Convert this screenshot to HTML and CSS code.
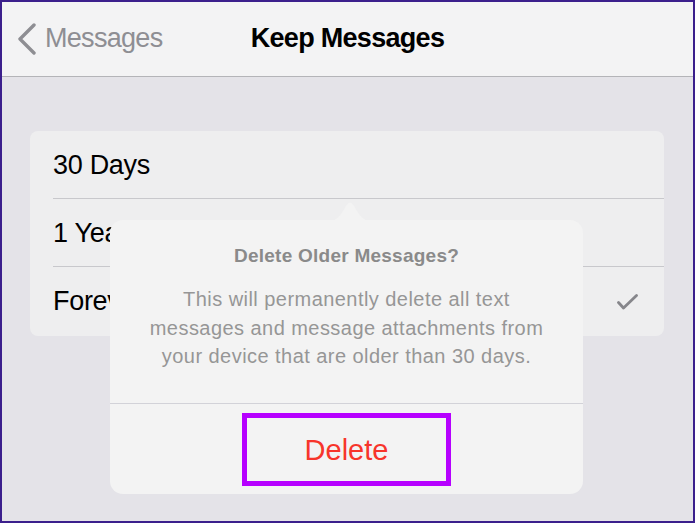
FILE: index.html
```html
<!DOCTYPE html>
<html>
<head>
<meta charset="utf-8">
<link rel="stylesheet" href="styles.css">
</head>
<body>
<div class="frame">
  <header class="nav">
    <div class="back">
      <svg class="chevron" width="20" height="32" viewBox="0 0 20 32"><path d="M17 2 L3 16 L17 30" fill="none" stroke="#8e8e93" stroke-width="3.4" stroke-linecap="round" stroke-linejoin="round"/></svg>
      <span>Messages</span>
    </div>
    <h1 class="title">Keep Messages</h1>
    <div></div>
  </header>
  <main class="content">
    <section class="card">
      <div class="row">30 Days</div>
      <div class="row">1 Year</div>
      <div class="row">
        <span>Forever</span>
        <svg class="check" width="21" height="16" viewBox="0 0 21 16"><path d="M1.5 8.5 L6.5 14 L19.5 1.5" fill="none" stroke="#86868b" stroke-width="2.8" stroke-linecap="round" stroke-linejoin="round"/></svg>
      </div>
    </section>
    <div class="popover">
      <svg class="arrow" width="42" height="21" viewBox="0 0 42 21"><path d="M0 21 C9 21 12 14 17 6 Q21 -1 25 6 C30 14 33 21 42 21 Z" fill="#f3f3f3"/></svg>
      <div class="pop-body">
        <div class="pop-title">Delete Older Messages?</div>
        <p class="pop-msg">This will permanently delete all text messages and message attachments from your device that are older than 30 days.</p>
      </div>
      <div class="pop-actions">
        <div class="highlight"><span class="delete">Delete</span></div>
      </div>
    </div>
  </main>
</div>
</body>
</html>
```
FILE: styles.css
```css
* { box-sizing: border-box; }
html, body { margin: 0; padding: 0; }
body {
  font-family: "Liberation Sans", Arial, sans-serif;
  background: #e4e3e8;
}
.frame {
  width: 695px;
  height: 523px;
  border: 2px solid #3b1f8c;
  background: #e4e3e8;
  position: relative;
  overflow: hidden;
}
.nav {
  height: 75px;
  background: #f3f3f4;
  border-bottom: 1px solid #b4b4b8;
  display: grid;
  grid-template-columns: 1fr auto 1fr;
  align-items: center;
  padding-bottom: 2px;
}
.back {
  display: flex;
  align-items: center;
  gap: 8px;
  padding-left: 15px;
  color: #8e8e93;
  font-size: 27px;
  line-height: 32px;
  letter-spacing: -0.7px;
}
.chevron { display: block; margin-top: 1px; }
.title {
  margin: 0;
  font-size: 27px;
  line-height: 32px;
  font-weight: bold;
  letter-spacing: -0.7px;
  color: #000;
  text-align: center;
}
.content {
  padding: 54px 29px 0 28px;
}
.card {
  background: #eeeeef;
  border-radius: 8px;
  padding-bottom: 2px;
}
.row {
  height: 67px;
  margin-left: 23px;
  padding-right: 26px;
  display: flex;
  align-items: center;
  justify-content: space-between;
  font-size: 27px;
  line-height: 32px;
  letter-spacing: -0.3px;
  color: #000;
}
.row + .row {
  height: 68px;
  border-top: 1px solid #c8c8cc;
}
.check { display: block; margin-top: 3px; }
.popover {
  position: absolute;
  left: 108px;
  top: 218px;
  width: 473px;
  height: 274px;
  background: #f3f3f3;
  border-radius: 13px;
  display: flex;
  flex-direction: column;
}
.arrow {
  position: absolute;
  left: 219px;
  top: -20px;
  display: block;
}
.pop-body {
  height: 184px;
  padding: 24px 28px 0;
  text-align: center;
  border-bottom: 1px solid #d2d2d8;
}
.pop-title {
  font-size: 19px;
  line-height: 24px;
  font-weight: bold;
  letter-spacing: 0.25px;
  color: #8a8a8a;
}
.pop-msg {
  margin: 17px 0 0;
  font-size: 20px;
  line-height: 28.5px;
  letter-spacing: 0.45px;
  color: #969696;
}
.pop-actions {
  flex: 1;
  display: flex;
  justify-content: center;
  padding-top: 9px;
}
.highlight {
  width: 209px;
  height: 73px;
  border: 5px solid #b600ff;
  display: flex;
  align-items: center;
  justify-content: center;
}
.delete {
  font-size: 29px;
  line-height: 1;
  margin-top: 2px;
  color: #f7352b;
}
```
